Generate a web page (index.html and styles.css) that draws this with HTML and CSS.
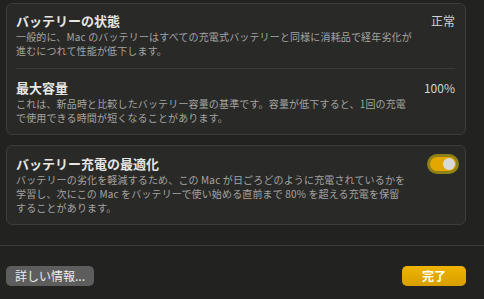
FILE: index.html
```html
<!DOCTYPE html>
<html lang="ja">
<head>
  <meta charset="UTF-8">
  <title>バッテリーの状態</title>
  <link rel="stylesheet" href="styles.css">
</head>
<body>
  <div class="content">
    <div class="card">
      <div class="row">
        <div class="row-head">
          <span class="title">バッテリーの状態</span>
          <span class="value">正常</span>
        </div>
        <p class="desc">一般的に、Mac のバッテリーはすべての充電式バッテリーと同様に消耗品で経年劣化が<br>進むにつれて性能が低下します。</p>
      </div>
      <div class="row">
        <div class="row-head">
          <span class="title">最大容量</span>
          <span class="value">100%</span>
        </div>
        <p class="desc">これは、新品時と比較したバッテリー容量の基準です。容量が低下すると、1回の充電<br>で使用できる時間が短くなることがあります。</p>
      </div>
    </div>

    <div class="card card-next">
      <div class="row">
        <div class="row-head">
          <span class="title">バッテリー充電の最適化</span>
          <span class="toggle on"><span class="knob"></span></span>
        </div>
        <p class="desc">バッテリーの劣化を軽減するため、この Mac が日ごろどのように充電されているかを<br>学習し、次にこの Mac をバッテリーで使い始める直前まで 80% を超える充電を保留<br>することがあります。</p>
      </div>
    </div>
  </div>

  <div class="footer">
    <button class="btn btn-gray">詳しい情報...</button>
    <button class="btn btn-primary">完了</button>
  </div>
</body>
</html>
```

FILE: styles.css
```css
* {
  box-sizing: border-box;
}
body {
  margin: 0;
  width: 484px;
  height: 299px;
  overflow: hidden;
  background: #222220;
  color: #e4e4e2;
  font-family: "Noto Sans CJK JP", "Noto Sans", sans-serif;
}
.content {
  padding: 3px 18px 0 6px;
}
.card {
  background: #292927;
  border: 1px solid #3c3c3a;
  border-radius: 6px;
  padding: 0 10px 0 9px;
}
.card-next {
  margin-top: 10px;
}
.row {
  padding: 10px 0 9px;
}
.row:first-child {
  padding-top: 8px;
}
.card .row:first-child:not(:last-child) {
  padding-bottom: 10px;
}
.card-next .row {
  padding-top: 9px;
}
.row + .row {
  border-top: 1px solid #3a3a38;
}
.row-head {
  display: flex;
  align-items: center;
  justify-content: space-between;
  height: 17px;
}
.title {
  font-size: 13px;
  font-weight: 700;
  line-height: 17px;
  color: #e6e6e4;
}
.value {
  font-size: 12px;
  line-height: 17px;
  color: #d2d2d0;
}
.desc {
  margin: 1px 0 0;
  font-size: 10px;
  line-height: 14px;
  letter-spacing: 0.15px;
  color: #a5a4a1;
  white-space: nowrap;
}
.toggle {
  position: relative;
  width: 26px;
  height: 14px;
  margin-right: -1px;
  border-radius: 7px;
  background: #3a3a38;
  box-shadow: 0 0 0 3px #8e8216;
}
.toggle.on {
  background: #e3a700;
}
.knob {
  position: absolute;
  top: 1px;
  right: 1px;
  width: 12px;
  height: 12px;
  border-radius: 50%;
  background: #d9d9d9;
}
.footer {
  margin-top: 20px;
  border-top: 1px solid #3b3b39;
  padding: 20px 18px 0 6px;
  display: flex;
  justify-content: space-between;
}
.btn {
  height: 20px;
  border: none;
  border-radius: 5px;
  font-family: inherit;
  font-size: 12px;
  line-height: 20px;
  padding: 0 9px;
  cursor: pointer;
}
.btn-gray {
  background: #5d5d5d;
  color: #ececec;
}
.btn-primary {
  width: 64px;
  background: linear-gradient(#efb300, #d79f00);
  color: #fff;
  font-weight: 700;
}
```
